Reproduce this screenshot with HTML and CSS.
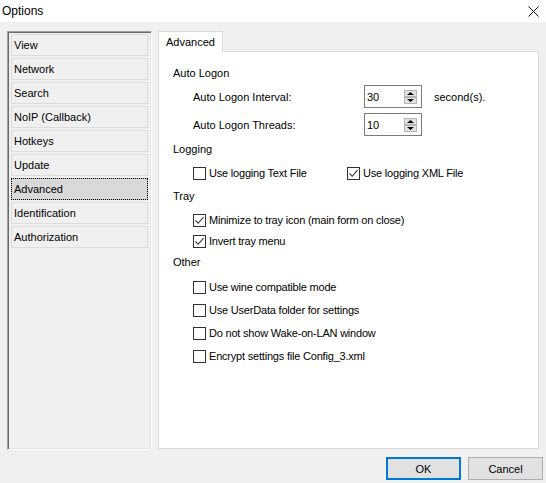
FILE: index.html
```html
<!DOCTYPE html>
<html>
<head>
<meta charset="utf-8">
<link rel="stylesheet" href="styles.css">
</head>
<body>
<div class="window">
  <div class="titlebar">
    <span class="title">Options</span>
    <svg class="close" width="11" height="11" viewBox="0 0 11 11"><path d="M0.5 0.5 L10.5 10.5 M10.5 0.5 L0.5 10.5" stroke="#1a1a1a" stroke-width="1" fill="none"/></svg>
  </div>
  <div class="main">
    <ul class="sidebar">
      <li class="item">View</li>
      <li class="item">Network</li>
      <li class="item">Search</li>
      <li class="item">NoIP (Callback)</li>
      <li class="item">Hotkeys</li>
      <li class="item">Update</li>
      <li class="item selected">Advanced</li>
      <li class="item">Identification</li>
      <li class="item">Authorization</li>
    </ul>
    <div class="tabs">
      <div class="tabstrip"><div class="tab">Advanced</div></div>
      <div class="page">
        <div class="group-label">Auto Logon</div>
        <div class="field f1">
          <span class="field-label">Auto Logon Interval:</span>
          <div class="spin"><span>30</span>
            <svg width="13" height="14" viewBox="0 0 13 14"><rect x="0.5" y="0.5" width="12" height="6" fill="#e3e3e3" stroke="#b5b5b5"/><rect x="0.5" y="7.5" width="12" height="6" fill="#e3e3e3" stroke="#b5b5b5"/><path d="M3 5 L10 5 L6.5 2 Z" fill="#000"/><path d="M3 9 L10 9 L6.5 12 Z" fill="#000"/></svg>
          </div>
          <span class="unit">second(s).</span>
        </div>
        <div class="field f2">
          <span class="field-label">Auto Logon Threads:</span>
          <div class="spin"><span>10</span>
            <svg width="13" height="14" viewBox="0 0 13 14"><rect x="0.5" y="0.5" width="12" height="6" fill="#e3e3e3" stroke="#b5b5b5"/><rect x="0.5" y="7.5" width="12" height="6" fill="#e3e3e3" stroke="#b5b5b5"/><path d="M3 5 L10 5 L6.5 2 Z" fill="#000"/><path d="M3 9 L10 9 L6.5 12 Z" fill="#000"/></svg>
          </div>
        </div>
        <div class="group-label g-logging">Logging</div>
        <div class="check-row r-logging">
          <label class="check wide"><span class="box"></span>Use logging Text File</label>
          <label class="check"><span class="box"><svg width="11" height="11" viewBox="0 0 11 11"><path d="M1.5 5.5 L4.2 8.3 L9.5 2.2" stroke="#333" stroke-width="1.1" fill="none"/></svg></span>Use logging XML File</label>
        </div>
        <div class="group-label g-tray">Tray</div>
        <div class="check-row r-min">
          <label class="check"><span class="box"><svg width="11" height="11" viewBox="0 0 11 11"><path d="M1.5 5.5 L4.2 8.3 L9.5 2.2" stroke="#333" stroke-width="1.1" fill="none"/></svg></span>Minimize to tray icon (main form on close)</label>
        </div>
        <div class="check-row r-inv">
          <label class="check"><span class="box"><svg width="11" height="11" viewBox="0 0 11 11"><path d="M1.5 5.5 L4.2 8.3 L9.5 2.2" stroke="#333" stroke-width="1.1" fill="none"/></svg></span>Invert tray menu</label>
        </div>
        <div class="group-label g-other">Other</div>
        <div class="check-row r-wine">
          <label class="check"><span class="box"></span>Use wine compatible mode</label>
        </div>
        <div class="check-row r-next">
          <label class="check"><span class="box"></span>Use UserData folder for settings</label>
        </div>
        <div class="check-row r-next">
          <label class="check"><span class="box"></span>Do not show Wake-on-LAN window</label>
        </div>
        <div class="check-row r-next">
          <label class="check"><span class="box"></span>Encrypt settings file Config_3.xml</label>
        </div>
      </div>
    </div>
  </div>
  <div class="footer">
    <button class="btn default">OK</button>
    <button class="btn">Cancel</button>
  </div>
</div>
</body>
</html>
```

FILE: styles.css
```css
html, body {
  margin: 0;
  padding: 0;
}
body {
  background: #f0f0f0;
  font: 11px "Liberation Sans", Arial, sans-serif;
  color: #000;
  width: 546px;
  height: 483px;
  overflow: hidden;
}
.titlebar {
  height: 22px;
  background: #fff;
  display: flex;
  align-items: center;
  justify-content: space-between;
  padding: 0 7px 0 2px;
  box-sizing: border-box;
}
.title {
  font-size: 12px;
}
.close {
  display: block;
}
.main {
  display: flex;
  padding-top: 9px;
}
.sidebar {
  margin: 0 0 0 7px;
  width: 145px;
  height: 419px;
  box-sizing: border-box;
  border: 1px solid;
  border-color: #a0a0a0 #fff #fff #a0a0a0;
  box-shadow: inset 1px 1px #696969, inset -1px -1px #e3e3e3;
  padding: 2px 3px 0;
  list-style: none;
  display: flex;
  flex-direction: column;
  gap: 2px;
}
.item {
  height: 22px;
  box-sizing: border-box;
  border: 1px solid #dcdcdc;
  padding-left: 2px;
  line-height: 20px;
}
.item.selected {
  background: #d9d9d9;
  border-color: #c6c6c6;
  outline: 1px dotted #000;
  outline-offset: -1px;
}
.tabs {
  margin-left: 6px;
  width: 381px;
  display: flex;
  flex-direction: column;
}
.tabstrip {
  height: 20px;
  display: flex;
}
.tab {
  height: 21px;
  box-sizing: border-box;
  border: 1px solid #d9d9d9;
  border-bottom: none;
  background: #fff;
  padding: 0 7px;
  line-height: 20px;
  position: relative;
  z-index: 1;
}
.page {
  height: 398px;
  box-sizing: border-box;
  border: 1px solid #d9d9d9;
  background: #fff;
  padding: 11px 0 0 14px;
}
.group-label {
  height: 20px;
  line-height: 20px;
}
.field {
  display: flex;
  align-items: center;
  margin-left: 20px;
  height: 23px;
}
.f1 { margin-top: 2px; }
.f2 { margin-top: 5px; }
.field-label {
  width: 171px;
}
.spin {
  width: 58px;
  height: 23px;
  box-sizing: border-box;
  border: 1px solid #7a7a7a;
  display: flex;
  align-items: center;
  justify-content: space-between;
  padding: 0 4px 0 2px;
}
.spin svg {
  display: block;
}
.unit {
  margin-left: 12px;
}
.g-logging { margin-top: 3px; }
.g-tray { margin-top: 3px; }
.g-other { margin-top: 1px; }
.check-row {
  display: flex;
  align-items: center;
  height: 20px;
  margin-left: 20px;
}
.r-logging { margin-top: 4px; }
.r-min { margin-top: 4px; }
.r-inv { margin-top: 1px; }
.r-wine { margin-top: 5px; }
.r-next { margin-top: 3px; }
.check {
  display: flex;
  align-items: center;
  letter-spacing: -0.2px;
}
.check.wide {
  width: 154px;
}
.box {
  width: 13px;
  height: 13px;
  box-sizing: border-box;
  border: 1px solid #333;
  margin-right: 3px;
  background: #fff;
  display: flex;
  align-items: center;
  justify-content: center;
}
.box svg {
  display: block;
}
.footer {
  display: flex;
  justify-content: flex-end;
  gap: 7px;
  padding-right: 3px;
  margin-top: 7px;
}
.btn {
  width: 75px;
  height: 23px;
  box-sizing: border-box;
  border: 1px solid #adadad;
  background: #e1e1e1;
  font: 11px "Liberation Sans", Arial, sans-serif;
  color: #000;
  padding: 0;
}
.btn.default {
  border: 2px solid #0078d7;
}
```
